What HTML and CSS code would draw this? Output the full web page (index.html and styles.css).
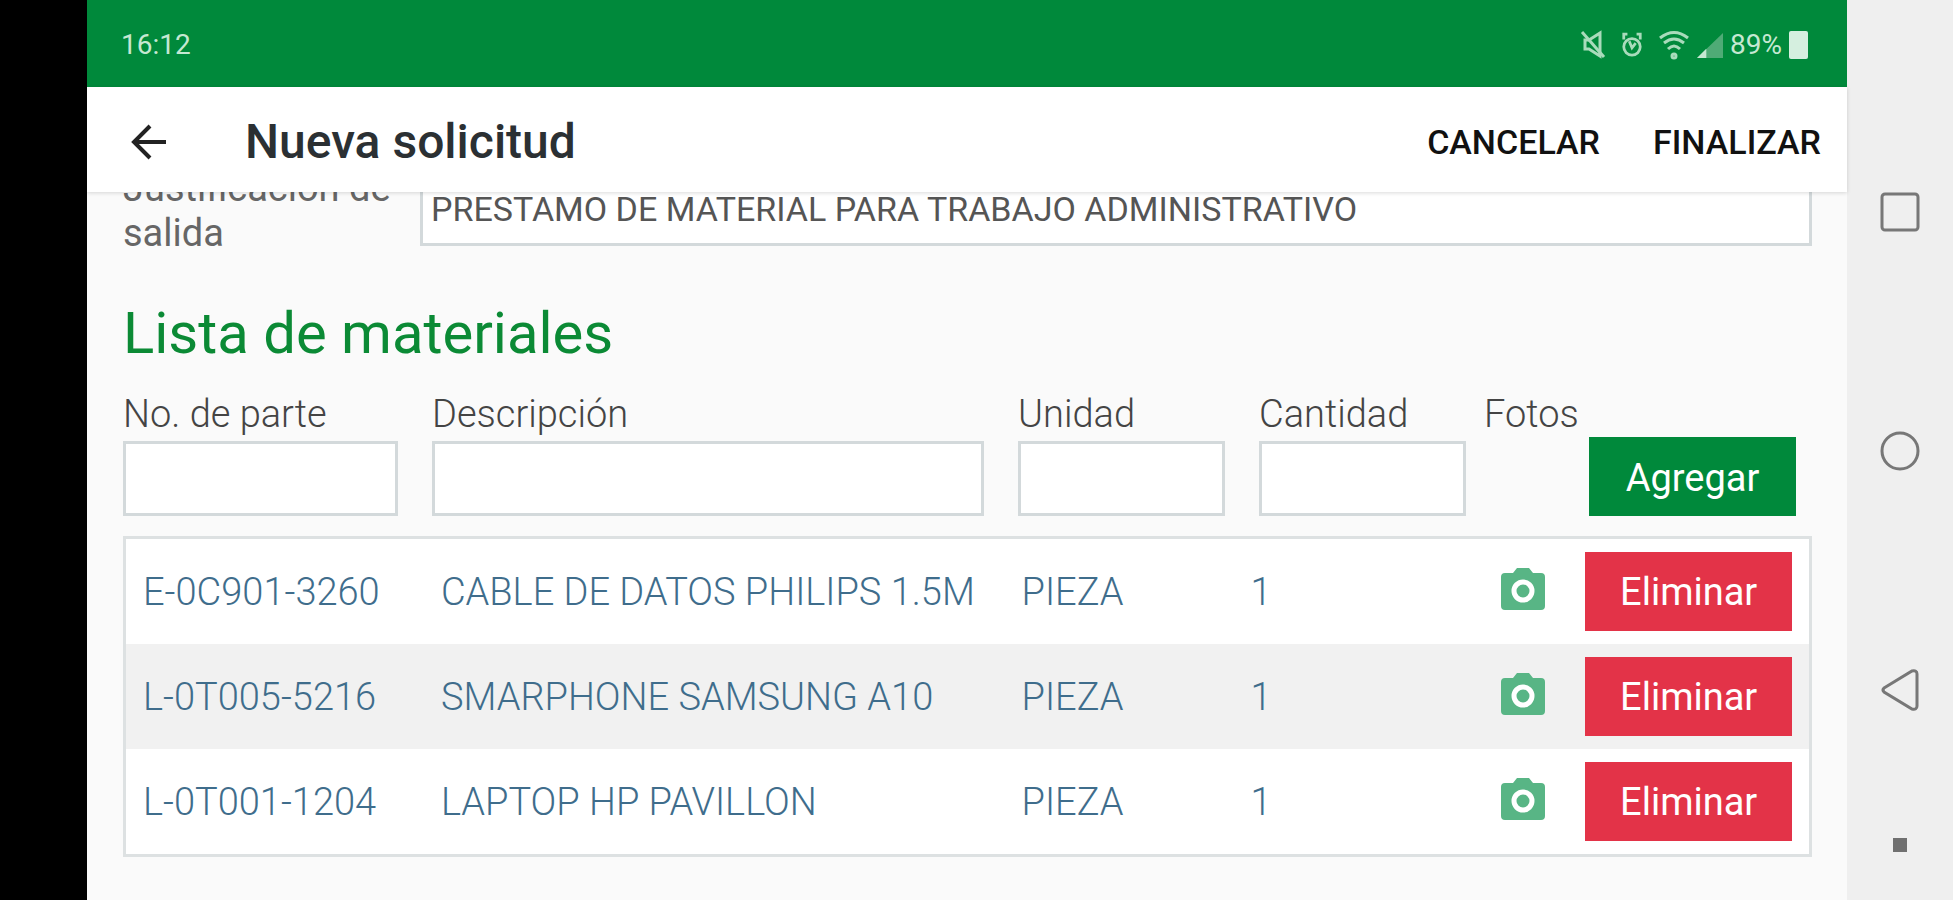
FILE: index.html
```html
<!DOCTYPE html>
<html lang="es">
<head>
  <meta charset="UTF-8">
  <title>Nueva solicitud</title>
  <link rel="stylesheet" href="styles.css">
</head>
<body>
  <div class="app">
    <div class="status-bar">
      <span class="clock">16:12</span>
      <div class="status-icons">
        <svg class="icon-mute" width="26" height="28" viewBox="0 0 26 28">
          <path d="M2 1 L24 26" />
          <path d="M5 9 H9 L20 2 V25 L9 18 H5 Z" />
        </svg>
        <svg class="icon-alarm" width="22" height="28" viewBox="0 0 24 28">
          <circle cx="12" cy="16" r="9" />
          <path d="M3 8 V2 H7 M21 8 V2 H17 M9 10 L12 17 L16 12" />
        </svg>
        <svg class="icon-wifi" width="32" height="28" viewBox="0 0 32 28">
          <path d="M2 7 Q16 -4 30 7 M6 12 Q16 4 26 12 M10 18 Q16 12 22 18" />
          <circle cx="16" cy="25" r="2" />
        </svg>
        <svg class="icon-signal" width="26" height="28" viewBox="0 0 28 28">
          <path class="signal-off" d="M0 28 L28 1 V28 Z" />
          <path class="signal-on" d="M0 28 L10 18 V28 Z" />
        </svg>
        <span class="battery-text">89%</span>
        <span class="battery"></span>
      </div>
    </div>

    <header class="toolbar">
      <button type="button" class="back-btn" aria-label="Regresar">
        <svg width="36" height="36" viewBox="0 0 36 36">
          <path d="M35 18 H3 M19 2 L3 18 L19 34" />
        </svg>
      </button>
      <h1>Nueva solicitud</h1>
      <button type="button" class="action-btn">CANCELAR</button>
      <button type="button" class="action-btn">FINALIZAR</button>
    </header>

    <main class="content">
      <div class="reason-row">
        <label for="reason">Justificación de salida</label>
        <input type="text" id="reason" value="PRESTAMO DE MATERIAL PARA TRABAJO ADMINISTRATIVO">
      </div>

      <h2>Lista de materiales</h2>

      <form class="material-form">
        <div class="field">
          <label for="part">No. de parte</label>
          <input type="text" id="part">
        </div>
        <div class="field">
          <label for="description">Descripción</label>
          <input type="text" id="description">
        </div>
        <div class="field">
          <label for="unit">Unidad</label>
          <input type="text" id="unit">
        </div>
        <div class="field field-qty">
          <label for="quantity">Cantidad</label>
          <input type="text" id="quantity">
        </div>
        <span class="photos-label">Fotos</span>
        <button type="button" class="btn btn-add">Agregar</button>
      </form>

      <table class="materials">
        <colgroup>
          <col class="col-part">
          <col class="col-description">
          <col class="col-unit">
          <col class="col-qty">
          <col class="col-photo">
          <col class="col-action">
        </colgroup>
        <tbody>
          <tr>
            <td>E-0C901-3260</td>
            <td>CABLE DE DATOS PHILIPS 1.5M</td>
            <td>PIEZA</td>
            <td>1</td>
            <td>
              <button type="button" class="photo-btn" aria-label="Fotos">
                <svg width="44" height="44" viewBox="0 0 44 44">
                  <path d="M4 6 H12 L16 1 H28 L32 6 H40 Q44 6 44 10 V39 Q44 43 40 43 H4 Q0 43 0 39 V10 Q0 6 4 6 Z" />
                  <circle cx="22" cy="24" r="9" />
                </svg>
              </button>
            </td>
            <td><button type="button" class="btn btn-delete">Eliminar</button></td>
          </tr>
          <tr>
            <td>L-0T005-5216</td>
            <td>SMARPHONE SAMSUNG A10</td>
            <td>PIEZA</td>
            <td>1</td>
            <td>
              <button type="button" class="photo-btn" aria-label="Fotos">
                <svg width="44" height="44" viewBox="0 0 44 44">
                  <path d="M4 6 H12 L16 1 H28 L32 6 H40 Q44 6 44 10 V39 Q44 43 40 43 H4 Q0 43 0 39 V10 Q0 6 4 6 Z" />
                  <circle cx="22" cy="24" r="9" />
                </svg>
              </button>
            </td>
            <td><button type="button" class="btn btn-delete">Eliminar</button></td>
          </tr>
          <tr>
            <td>L-0T001-1204</td>
            <td>LAPTOP HP PAVILLON</td>
            <td>PIEZA</td>
            <td>1</td>
            <td>
              <button type="button" class="photo-btn" aria-label="Fotos">
                <svg width="44" height="44" viewBox="0 0 44 44">
                  <path d="M4 6 H12 L16 1 H28 L32 6 H40 Q44 6 44 10 V39 Q44 43 40 43 H4 Q0 43 0 39 V10 Q0 6 4 6 Z" />
                  <circle cx="22" cy="24" r="9" />
                </svg>
              </button>
            </td>
            <td><button type="button" class="btn btn-delete">Eliminar</button></td>
          </tr>
        </tbody>
      </table>
    </main>
  </div>

  <nav class="system-nav">
    <button type="button" aria-label="Recientes">
      <svg width="40" height="40" viewBox="0 0 40 40"><rect x="2" y="2" width="36" height="36" rx="3" /></svg>
    </button>
    <button type="button" aria-label="Inicio">
      <svg width="40" height="40" viewBox="0 0 40 40"><circle cx="20" cy="20" r="18" /></svg>
    </button>
    <button type="button" aria-label="Atrás">
      <svg width="40" height="40" viewBox="0 0 40 40"><path d="M4 18 L32 1 Q37 0 37 4 V36 Q37 40 32 39 L4 22 Q2 20 4 18 Z" /></svg>
    </button>
    <span class="nav-dot"></span>
  </nav>
</body>
</html>
```
FILE: styles.css
```css
* {
  box-sizing: border-box;
}

body {
  font-family: Roboto, sans-serif;
  background: #000;
  margin: 0;
  padding-left: 87px;
  display: flex;
  height: 100vh;
  overflow: hidden;
}

button {
  font-family: inherit;
  border: none;
  background: none;
  padding: 0;
  cursor: pointer;
}

svg {
  display: block;
  overflow: visible;
}

.app {
  flex: 1;
  display: flex;
  flex-direction: column;
  background: #fafafa;
}

/* Status bar */
.status-bar {
  height: 87px;
  flex-shrink: 0;
  padding: 2px 39px 0 34px;
  display: flex;
  justify-content: space-between;
  align-items: center;
  background: #00893b;
  color: #c5e8d2;
  font-size: 28px;
}

.status-icons {
  display: flex;
  align-items: center;
  gap: 7px;
}

.status-icons svg {
  fill: none;
  stroke: #a9dbbb;
  stroke-width: 3;
}

.status-icons .icon-mute,
.status-icons .icon-alarm {
  margin-right: 8px;
}

.status-icons .icon-signal {
  stroke: none;
}

.signal-off {
  fill: #4fab76;
}

.signal-on {
  fill: #c5e8d2;
}

.battery {
  width: 19px;
  height: 28px;
  border-radius: 2px;
  background: #d5efdf;
}

/* Toolbar */
.toolbar {
  position: relative;
  height: 105px;
  flex-shrink: 0;
  padding: 4px 26px 0 44px;
  display: flex;
  align-items: center;
  background: #fff;
  box-shadow: 0 1px 4px rgba(0,0,0,0.15);
}

.back-btn svg {
  fill: none;
  stroke: #222;
  stroke-width: 4;
}

.toolbar h1 {
  flex: 1;
  margin: 0 0 0 78px;
  font-size: 48px;
  font-weight: 500;
  color: #2b3033;
}

.action-btn {
  margin-left: 53px;
  font-size: 34px;
  font-weight: 500;
  color: #111;
}

/* Form */
.content {
  flex: 1;
  padding: 0 35px 0 36px;
  overflow: hidden;
}

.reason-row {
  margin-top: -26px;
  display: flex;
  align-items: flex-end;
  font-size: 38px;
  color: #666;
}

.reason-row label {
  width: 297px;
  line-height: 45px;
}

input {
  width: 100%;
  height: 75px;
  padding: 0 8px;
  border: 3px solid #d3d9db;
  border-radius: 0;
  background: #fff;
  font-family: inherit;
  font-size: 34px;
  color: #555;
}

.reason-row input {
  flex: 1;
  margin-bottom: 10px;
}

.content h2 {
  margin: 44px 0 24px;
  font-size: 58px;
  line-height: 66px;
  font-weight: 400;
  color: #0b8a35;
}

.material-form {
  display: grid;
  grid-template-columns: 309fr 586fr 241fr 225fr 105fr 223fr;
  font-size: 38px;
  font-weight: 300;
  line-height: 48px;
  color: #444;
}

.field {
  padding-right: 34px;
}

.field-qty {
  padding-right: 18px;
}

.field label {
  display: block;
  margin-bottom: 3px;
}

.btn {
  display: block;
  width: 100%;
  height: 79px;
  font-size: 38px;
  font-weight: 400;
  color: #fff;
}

.btn-add {
  align-self: end;
  width: auto;
  margin: 0 16px 0 0;
  padding-top: 3px;
  background: #00893b;
}

.btn-delete {
  background: #e33348;
}

/* Materials table */
.materials {
  width: 100%;
  margin-top: 20px;
  table-layout: fixed;
  border: 3px solid #dde1e2;
  border-spacing: 0;
  background: #fff;
  font-size: 38px;
  font-weight: 300;
  color: #3f6d8c;
}

.col-part { width: 17.7%; }
.col-description { width: 34.5%; }
.col-unit { width: 13.6%; }
.col-qty { width: 14.9%; }
.col-photo { width: 5%; }
.col-action { width: 14.3%; }

.materials td {
  height: 105px;
  padding: 0 17px;
  white-space: nowrap;
}

.materials tr:nth-child(even) {
  background: #f1f1f1;
}

.photo-btn {
  display: block;
  margin-bottom: 6px;
}

.photo-btn svg {
  fill: #58b585;
}

.photo-btn circle {
  fill: none;
  stroke: #fff;
  stroke-width: 5;
}

/* Android navigation */
.system-nav {
  width: 106px;
  padding: 92px 0 48px;
  display: flex;
  flex-direction: column;
  align-items: center;
  background: #efefef;
}

.system-nav button {
  flex: 1;
}

.system-nav svg {
  fill: none;
  stroke: #777;
  stroke-width: 3;
}

.nav-dot {
  width: 14px;
  height: 14px;
  margin-top: 28px;
  background: #707070;
}
```
